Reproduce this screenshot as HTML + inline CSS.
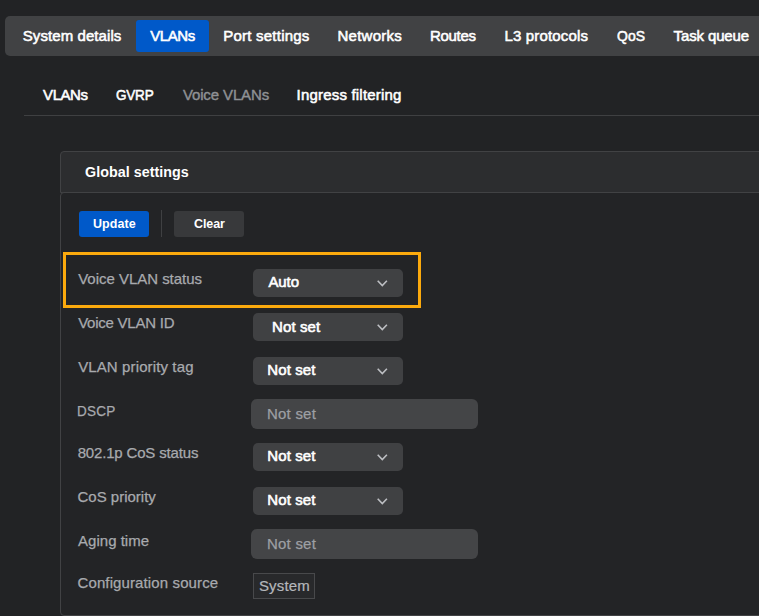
<!DOCTYPE html>
<html><head><meta charset="utf-8"><title>Voice VLANs</title>
<style>
*{box-sizing:border-box;margin:0;padding:0}
html,body{width:759px;height:616px;overflow:hidden;background:#222325;font-family:"Liberation Sans",sans-serif;}
body{position:relative;color:#fff}
.abs{position:absolute;white-space:nowrap;transform-origin:0 50%}
.nav{left:5px;top:16px;width:800px;height:40px;background:#414244;border-radius:5px}
.tab{height:40px;line-height:40px;font-size:15px;color:#fff;-webkit-text-stroke:0.55px #fff}
.act{left:136px;top:20px;width:73px;height:32px;background:#0059c9;border-radius:3px}
.sub{height:20px;line-height:20px;font-size:15px;color:#fff;-webkit-text-stroke:0.55px #fff}
.dim{color:#8f9195;-webkit-text-stroke:0.4px #8f9195}
.hr{left:24px;top:115px;width:760px;height:1px;background:#3f4042}
.phead{left:60px;top:151px;width:760px;height:42px;border:1px solid #414244;border-radius:4px 0 0 0;background:#2c2d2f}
.pbody{left:60px;top:192px;width:760px;height:424px;border:1px solid #414244;border-radius:4px 0 0 4px;background:#232426}
.title{height:20px;line-height:20px;font-size:14.5px;font-weight:bold}
.btn{top:211px;width:70px;height:26px;border-radius:3px}
.btxt{height:26px;line-height:26px;font-size:13px;font-weight:bold;color:#fff}
.lbl{height:20px;line-height:20px;font-size:15px;color:#a8aaae;-webkit-text-stroke:0.25px #a8aaae}
.sel{left:253px;width:150px;height:28px;background:#404143;border-radius:5px}
.inp{left:251px;width:227px;height:30px;background:#444547;border-radius:6px}
.stxt{height:26px;line-height:26px;font-size:15px;color:#fff;-webkit-text-stroke:0.6px #fff}
.itxt{height:30px;line-height:30px;font-size:15px;color:#9d9fa3;-webkit-text-stroke:0.25px #9d9fa3}
.sys{height:24px;line-height:24px;font-size:15px;color:#b5b7bb;-webkit-text-stroke:0.2px #b5b7bb}
.sysbox{left:253px;top:573px;width:62px;height:26px;border:1px solid #48494b;background:#28292b}
.chev{left:377px;width:11px;height:7px}
</style></head><body>
<div class="abs nav"></div>
<div class="abs act"></div>
<div class="abs hr"></div>
<div class="abs phead"></div>
<div class="abs pbody"></div>
<div class="abs btn" style="left:79px;background:#0059c9"></div>
<div class="abs" style="left:161px;top:210px;width:1px;height:27px;background:#3f4042"></div>
<div class="abs btn" style="left:174px;background:#38393b"></div>
<div class="abs" style="left:63px;top:252px;width:358px;height:56px;border:3px solid #fbaa0d"></div>
<div class="abs sel" style="top:269px"></div>
<div class="abs sel" style="top:313px"></div>
<div class="abs sel" style="top:357px"></div>
<div class="abs inp" style="top:399px"></div>
<div class="abs sel" style="top:443px"></div>
<div class="abs sel" style="top:487px"></div>
<div class="abs inp" style="top:529px"></div>
<div class="abs sysbox"></div>
<div class="abs tab" style="left:22.74px;top:16px;letter-spacing:0.081px;">System details</div>
<div class="abs tab" style="left:150.22px;top:16px;letter-spacing:-0.443px;">VLANs</div>
<div class="abs tab" style="left:223.17px;top:16px;letter-spacing:0.237px;">Port settings</div>
<div class="abs tab" style="left:337.55px;top:16px;letter-spacing:0.230px;">Networks</div>
<div class="abs tab" style="left:430.08px;top:16px;letter-spacing:-0.340px;">Routes</div>
<div class="abs tab" style="left:504.38px;top:16px;letter-spacing:0.177px;">L3 protocols</div>
<div class="abs tab" style="left:616.66px;top:16px;letter-spacing:0.027px;transform:scaleX(0.93);">QoS</div>
<div class="abs tab" style="left:673.55px;top:16px;letter-spacing:-0.128px;">Task queue</div>
<div class="abs sub" style="left:43.11px;top:85px;letter-spacing:-0.463px;">VLANs</div>
<div class="abs sub" style="left:116.21px;top:85px;letter-spacing:-0.227px;transform:scaleX(0.9);">GVRP</div>
<div class="abs sub dim" style="left:182.88px;top:85px;letter-spacing:-0.122px;">Voice VLANs</div>
<div class="abs sub" style="left:296.56px;top:85px;letter-spacing:0.195px;">Ingress filtering</div>
<div class="abs title" style="left:85.26px;top:162px;letter-spacing:0.045px;transform:scaleX(0.985);">Global settings</div>
<div class="abs btxt" style="left:92.68px;top:211px;letter-spacing:0.101px;transform:scaleX(0.96);">Update</div>
<div class="abs btxt" style="left:193.70px;top:211px;letter-spacing:-0.091px;transform:scaleX(0.96);">Clear</div>
<div class="abs lbl" style="left:78.21px;top:269px;letter-spacing:-0.026px;">Voice VLAN status</div>
<div class="abs lbl" style="left:78.13px;top:313px;letter-spacing:-0.238px;">Voice VLAN ID</div>
<div class="abs lbl" style="left:78.13px;top:357px;letter-spacing:0.123px;">VLAN priority tag</div>
<div class="abs lbl" style="left:77.28px;top:401px;letter-spacing:0.254px;transform:scaleX(0.9);">DSCP</div>
<div class="abs lbl" style="left:77.66px;top:443px;letter-spacing:-0.167px;">802.1p CoS status</div>
<div class="abs lbl" style="left:77.50px;top:487px;letter-spacing:-0.003px;">CoS priority</div>
<div class="abs lbl" style="left:78.08px;top:531px;letter-spacing:0.009px;">Aging time</div>
<div class="abs lbl" style="left:77.50px;top:573px;letter-spacing:0.116px;">Configuration source</div>
<div class="abs stxt" style="left:268.47px;top:269px;letter-spacing:-0.111px;">Auto</div>
<div class="abs stxt" style="left:272.11px;top:314px;letter-spacing:0.098px;">Not set</div>
<div class="abs stxt" style="left:267.36px;top:357px;letter-spacing:0.099px;">Not set</div>
<div class="abs itxt" style="left:266.99px;top:399px;letter-spacing:0.225px;">Not set</div>
<div class="abs stxt" style="left:267.36px;top:443px;letter-spacing:0.099px;">Not set</div>
<div class="abs stxt" style="left:267.36px;top:487px;letter-spacing:0.099px;">Not set</div>
<div class="abs itxt" style="left:266.99px;top:529px;letter-spacing:0.225px;">Not set</div>
<div class="abs sys" style="left:258.94px;top:574px;letter-spacing:0.158px;">System</div>
<svg class="abs chev" style="top:280px" viewBox="0 0 11 7"><path d="M0.7 0.8 L5.3 5.5 L9.9 0.8" fill="none" stroke="#bdbfc3" stroke-width="1.6"/></svg>
<svg class="abs chev" style="top:324px" viewBox="0 0 11 7"><path d="M0.7 0.8 L5.3 5.5 L9.9 0.8" fill="none" stroke="#bdbfc3" stroke-width="1.6"/></svg>
<svg class="abs chev" style="top:368px" viewBox="0 0 11 7"><path d="M0.7 0.8 L5.3 5.5 L9.9 0.8" fill="none" stroke="#bdbfc3" stroke-width="1.6"/></svg>
<svg class="abs chev" style="top:454px" viewBox="0 0 11 7"><path d="M0.7 0.8 L5.3 5.5 L9.9 0.8" fill="none" stroke="#bdbfc3" stroke-width="1.6"/></svg>
<svg class="abs chev" style="top:498px" viewBox="0 0 11 7"><path d="M0.7 0.8 L5.3 5.5 L9.9 0.8" fill="none" stroke="#bdbfc3" stroke-width="1.6"/></svg>
</body></html>
